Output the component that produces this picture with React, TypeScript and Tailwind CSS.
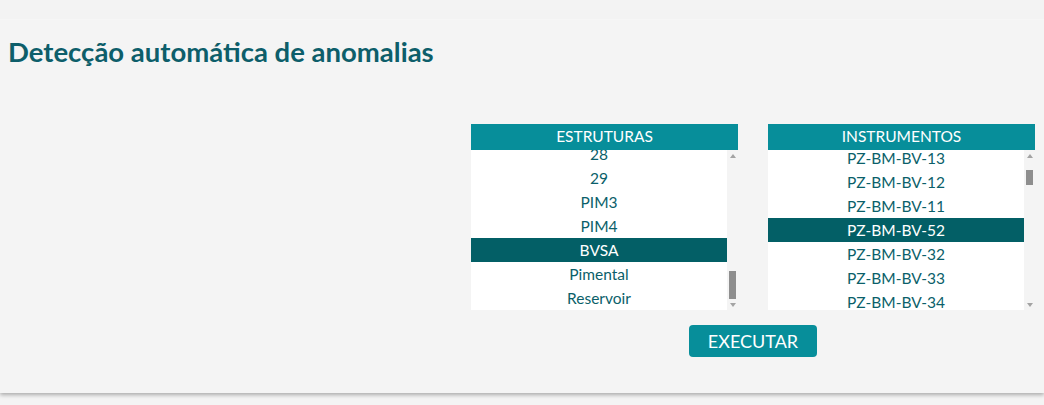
type ListBoxProps = {
  title: string
  items: string[]
  selected: string
  offset: string
  thumbGap: string
  thumbHeight: string
}

function Arrow({ up }: { up?: boolean }) {
  return (
    <div className="h-[11px] flex items-center justify-center">
      {up ? (
        <div className="w-0 h-0 border-l-[3.5px] border-r-[3.5px] border-b-[4px] border-l-transparent border-r-transparent border-b-[#a3a3a3]" />
      ) : (
        <div className="w-0 h-0 border-l-[3.5px] border-r-[3.5px] border-t-[4px] border-l-transparent border-r-transparent border-t-[#a3a3a3]" />
      )}
    </div>
  )
}

function ListBox({ title, items, selected, offset, thumbGap, thumbHeight }: ListBoxProps) {
  return (
    <div className="w-[267px] flex flex-col">
      {/* cabeçalho */}
      <div className="h-[26px] bg-[#078e9a] text-white text-[15.5px] flex items-center justify-center">
        {title}
      </div>
      <div className="h-[160px] flex">
        {/* itens */}
        <div className="w-[256px] bg-white overflow-hidden">
          <div className={offset}>
            {items.map((item) => (
              <div
                key={item}
                className={
                  item === selected
                    ? 'h-[24px] pt-[1px] flex items-center justify-center text-[15.5px] bg-[#035f66] text-white'
                    : 'h-[24px] pt-[1px] flex items-center justify-center text-[15.5px] text-[#0b5f6a]'
                }
              >
                {item}
              </div>
            ))}
          </div>
        </div>
        {/* barra de rolagem */}
        <div className="w-[11px] bg-[#f4f4f4] flex flex-col">
          <Arrow up />
          <div className={thumbGap} />
          <div className={`${thumbHeight} mx-[2px] bg-[#8e8e8e]`} />
          <div className="flex-1" />
          <Arrow />
        </div>
      </div>
    </div>
  )
}

export default function App() {
  const estruturas = ['28', '29', 'PIM3', 'PIM4', 'BVSA', 'Pimental', 'Reservoir']
  const instrumentos = [
    'PZ-BM-BV-13',
    'PZ-BM-BV-12',
    'PZ-BM-BV-11',
    'PZ-BM-BV-52',
    'PZ-BM-BV-32',
    'PZ-BM-BV-33',
    'PZ-BM-BV-34',
  ]

  return (
    <div className="min-h-screen bg-[#f4f4f4] font-['Lato',sans-serif]">
      <div className="h-[393px] bg-[#f4f4f4] shadow-[0_2px_4px_rgba(0,0,0,0.3)] flex flex-col">
        <div className="h-[20px] bg-[#f3f3f3] border-b border-[#f6f6f6]" />

        <h1 className="mt-[18px] pl-[8px] text-[27.5px] leading-[28px] font-bold text-[#0d5e6a]">
          Detecção automática de anomalias
        </h1>

        <div className="mt-[58px] flex justify-end pr-[9px]">
          <div className="w-[564px] flex flex-col items-center">
            <div className="flex gap-[30px]">
              <ListBox
                title="ESTRUTURAS"
                items={estruturas}
                selected="BVSA"
                offset="-mt-[8px]"
                thumbGap="h-[110px]"
                thumbHeight="h-[28px]"
              />
              <ListBox
                title="INSTRUMENTOS"
                items={instrumentos}
                selected="PZ-BM-BV-52"
                offset="-mt-[4px]"
                thumbGap="h-[9px]"
                thumbHeight="h-[15px]"
              />
            </div>
            <button className="mt-[15px] w-[128px] h-[32px] rounded-[4px] bg-[#078e9a] text-white text-[18px] flex items-center justify-center">
              EXECUTAR
            </button>
          </div>
        </div>
      </div>
    </div>
  )
}
